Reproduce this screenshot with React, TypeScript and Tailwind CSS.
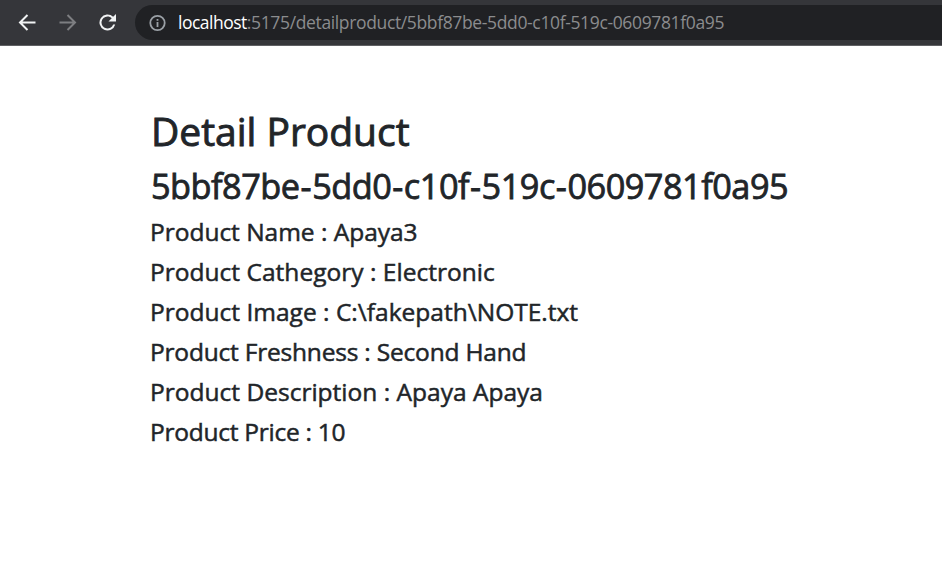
import { Fragment } from "react";

const productId = "5bbf87be-5dd0-c10f-519c-0609781f0a95";

const details = [
  { label: "Product Name", value: "Apaya3", tracking: "tracking-[-0.02px]" },
  { label: "Product Cathegory", value: "Electronic", tracking: "tracking-[0.02px]" },
  { label: "Product Image", value: "C:\\fakepath\\NOTE.txt", tracking: "tracking-[0.01px]" },
  { label: "Product Freshness", value: "Second Hand", tracking: "tracking-[-0.2px]" },
  { label: "Product Description", value: "Apaya Apaya", tracking: "tracking-[0.01px]" },
  { label: "Product Price", value: "10", tracking: "tracking-[-0.26px]" },
];

export default function App() {
  return (
    <div className="h-[577px] w-full overflow-hidden bg-white font-['Open_Sans',sans-serif] text-[#212529]">
      <header className="flex h-[46px] items-center border-b border-[#5f6063] bg-[#35363a]">
        <div className="flex w-[135px] shrink-0 items-center gap-4 pl-[15px]">
          <svg width="24" height="24" viewBox="0 0 24 24" fill="none" stroke="#f1f3f4" strokeWidth="2"><path d="M20.5 11.5H5.5M12.5 4L5 11.5l7.5 7.5" /></svg>
          <svg width="24" height="24" viewBox="0 0 24 24" fill="none" stroke="#7d7e81" strokeWidth="2"><path d="M4.5 11.5h15M12.5 4l7.5 7.5-7.5 7.5" /></svg>
          <svg width="24" height="24" viewBox="0 0 24 24" fill="#f1f3f4"><path d="M18.15 5.85A8 8 0 1 0 20.23 13.5h-2.08A6 6 0 1 1 12.5 5.5c1.66 0 3.14.69 4.22 1.78L13.5 10.5H21V3z" /></svg>
        </div>
        <div className="flex h-[35px] flex-1 items-center rounded-l-full bg-[#202124] pl-[14px]">
          <svg width="18" height="18" viewBox="0 0 18 18" fill="none" stroke="#9aa0a6" strokeWidth="1.8"><circle cx="8.5" cy="9" r="7.2" /><path d="M8.5 8v5M8.5 5v1.8" /></svg>
          <p className="-mt-px ml-[11px] whitespace-nowrap text-[17.5px] leading-[24px] tracking-[-0.36px] text-[#8b8c8e]"><span className="tracking-[-0.5px] text-white">localhost</span>:5175/detailproduct/{productId}</p>
        </div>
      </header>
      <main className="pl-[150px] pt-[61px] font-normal">
        <h1 className="h-[57px] pl-px text-[39px] leading-[48px] tracking-[-0.02px] [-webkit-text-stroke:0.9px_#212529]">Detail Product</h1>
        <h2 className="h-[48px] whitespace-nowrap pl-px text-[34.3px] leading-[43px] tracking-[-0.5px] [-webkit-text-stroke:0.8px_#212529]">
          {productId.split("-").map((part, i) => (
            <Fragment key={i}>{i > 0 && <span className="px-px">-</span>}{part}</Fragment>
          ))}
        </h2>
        <div className="text-[24.5px] leading-[40px] [-webkit-text-stroke:0.5px_#212529]">
          {details.map((d) => <p key={d.label} className={d.tracking}>{d.label} : {d.value}</p>)}
        </div>
      </main>
    </div>
  );
}
